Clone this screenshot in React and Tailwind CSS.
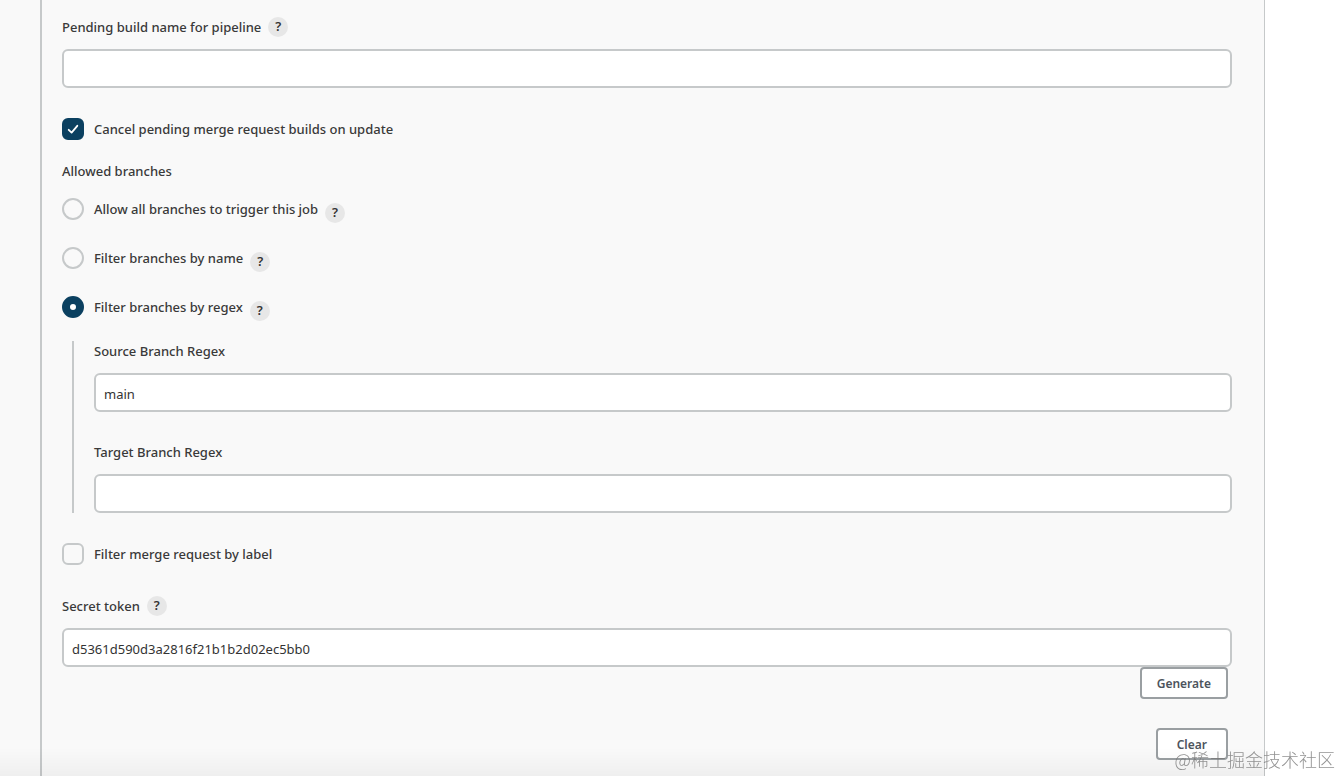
import { useState } from "react";

const inputClass =
  "block h-[39px] w-full rounded-md border-2 border-[#c6c9ca] bg-white px-2 pt-0.5 text-[13px] font-normal text-[#333] outline-none focus:border-[#0b4060]";

function Help({ topic, className = "" }) {
  return (
    <button
      type="button"
      aria-label={`Help for ${topic}`}
      className={`flex size-5 shrink-0 items-center justify-center rounded-full bg-[#e7e7e7] text-[13px] font-semibold text-[#333] ${className}`}
    >
      ?
    </button>
  );
}

function Field({ id, label, help, value, className = "" }) {
  return (
    <div className={className}>
      <div className="mb-3 flex h-5 items-start gap-[7px]">
        <label htmlFor={id} className="leading-[21px]">
          {label}
        </label>
        {help && <Help topic={label} />}
      </div>
      <input id={id} type="text" defaultValue={value} className={inputClass} />
    </div>
  );
}

function Check({ label, defaultChecked, className = "" }) {
  return (
    <label className={`flex h-[22px] w-fit items-start gap-[10px] ${className}`}>
      <span className="grid size-[22px]">
        <input
          type="checkbox"
          defaultChecked={defaultChecked}
          className="peer col-start-1 row-start-1 size-[22px] appearance-none rounded-md border-2 border-[#c6c9ca] checked:border-[#0b4060] checked:bg-[#0b4060]"
        />
        <svg
          viewBox="0 0 22 22"
          className="pointer-events-none invisible col-start-1 row-start-1 size-[22px] peer-checked:visible"
          fill="none"
          stroke="white"
          strokeWidth="1.8"
          strokeLinecap="round"
          strokeLinejoin="round"
        >
          <path d="M6.7 11.8 L9.6 14.6 L15.3 7.8" />
        </svg>
      </span>
      <span className="leading-[23px]">{label}</span>
    </label>
  );
}

function Choice({ label, checked, onChange }) {
  return (
    <div className="flex items-start gap-[7px]">
      <label className="flex h-[22px] items-start gap-[10px]">
        <input
          type="radio"
          name="branches"
          checked={checked}
          onChange={onChange}
          className="size-[22px] appearance-none rounded-full border-2 border-[#c6c9ca] checked:border-8 checked:border-[#0b4060] checked:bg-white"
        />
        <span className="leading-[23px]">{label}</span>
      </label>
      <Help topic={label} className="mt-[5px]" />
    </div>
  );
}

const choices = [
  "Allow all branches to trigger this job",
  "Filter branches by name",
  "Filter branches by regex",
];

const buttonClass =
  "h-8 rounded border-2 border-[#9a9fa2] bg-white pt-0.5 text-xs font-semibold text-[#4d545d]";

export default function App() {
  const [choice, setChoice] = useState(2);

  return (
    <div className="min-h-screen bg-white pr-[76px] font-['Noto_Sans',sans-serif] text-[13px] font-medium text-[#3a3a3a]">
      <main className="min-h-screen border-r border-[#c6c9ca] bg-[#f9f9f9] pl-10">
        <form
          className="flex min-h-screen flex-col border-l-2 border-[#c6c9ca] pt-[17px] pr-8 pb-4 pl-5"
          onSubmit={(e) => e.preventDefault()}
        >
          <Field id="pending-name" label="Pending build name for pipeline" help />
          <Check
            className="mt-[30px]"
            label="Cancel pending merge request builds on update"
            defaultChecked
          />
          <fieldset className="mt-5">
            <legend className="mb-4 leading-[22px]">Allowed branches</legend>
            <div className="flex flex-col gap-6">
              {choices.map((label, i) => (
                <Choice
                  key={label}
                  label={label}
                  checked={choice === i}
                  onChange={() => setChoice(i)}
                />
              ))}
            </div>
            <div className="mt-5 ml-[10px] border-l-2 border-[#c6c9ca] pl-5">
              <Field id="source-regex" label="Source Branch Regex" value="main" />
              <Field className="mt-[30px]" id="target-regex" label="Target Branch Regex" />
            </div>
          </fieldset>
          <Check className="mt-[30px]" label="Filter merge request by label" />
          <Field
            className="mt-[31px]"
            id="secret-token"
            label="Secret token"
            help
            value="d5361d590d3a2816f21b1b2d02ec5bb0"
          />
          <div className="flex flex-col items-end gap-[29px] pr-1">
            <button type="button" className={`${buttonClass} px-[15px]`}>
              Generate
            </button>
            <button type="button" className={`${buttonClass} px-[19px]`}>
              Clear
            </button>
          </div>
        </form>
      </main>
      <div className="pointer-events-none fixed right-[76px] bottom-0 left-0 h-7 bg-linear-to-b from-transparent to-black/4" />
      <div className="pointer-events-none fixed right-[6px] bottom-[5px] font-['Noto_Sans_CJK_SC',sans-serif] text-lg leading-6 font-light text-[#777]/80">
        @稀土掘金技术社区
      </div>
    </div>
  );
}
